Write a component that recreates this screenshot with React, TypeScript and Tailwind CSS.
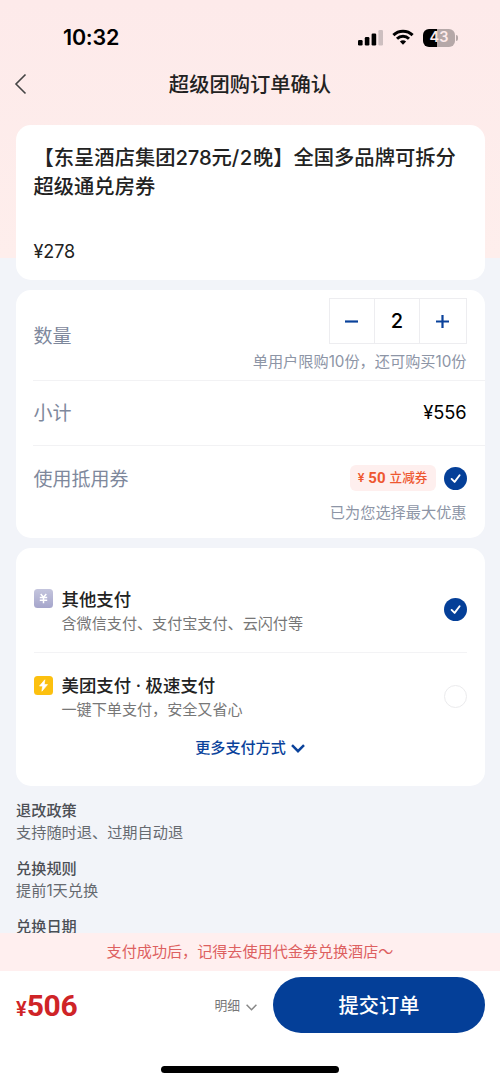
import type { ReactNode } from "react";

const policies = [
  { title: "退改政策", text: "支持随时退、过期自动退" },
  { title: "兑换规则", text: "提前1天兑换" },
  { title: "兑换日期", text: "" },
];

const StatusBar = () => (
  <div className="flex h-[60px] shrink-0 items-start justify-between pt-[26px] pr-[42px] pl-[63px]">
    <span className="text-[21.5px] leading-[23px] font-semibold tracking-[-0.2px] text-black">10:32</span>
    <div className="flex h-6 items-center">
      <svg width="26" height="18" viewBox="0 0 26 18" className="mr-[8px]">
        <rect x="0" y="11" width="4.6" height="5.5" rx="1.2" />
        <rect x="6.8" y="8" width="4.6" height="8.5" rx="1.2" />
        <rect x="13.6" y="4.5" width="4.6" height="12" rx="1.2" />
        <rect x="20.4" y="1" width="4.6" height="15.5" rx="1.2" fill="#cdbfc0" />
      </svg>
      {/* Wifi */}
      <svg width="22" height="17" viewBox="0 0 22 17" className="mr-[9px] -mt-px" fill="none" stroke="#000" strokeWidth="3">
        <path d="M1.4 6.1a13.7 13.7 0 0 1 19.2 0" />
        <path d="M5 9.8a8.6 8.6 0 0 1 12 0" />
        <path d="M7.9 12.6a4.5 4.5 0 0 1 6.2 0L11 15.8z" fill="#000" stroke="none" />
      </svg>
      {/* Battery, filled to 43% */}
      <div className="-mt-px flex h-[18px] w-[32px] items-center justify-center rounded-[6px] bg-[linear-gradient(90deg,#000_43%,#b5a8a8_43%)] text-[14.5px] leading-none font-semibold text-[#fdebeb]">
        43
      </div>
      <div className="-mt-px ml-px h-[6px] w-[2px] rounded-r-full bg-[#b5a8a8]" />
    </div>
  </div>
);

const Card = ({ className, children }: { className: string; children: ReactNode }) => (
  <section className={`mx-auto w-[469px] shrink-0 rounded-[15px] bg-white ${className}`}>{children}</section>
);

const CheckedCircle = () => (
  <svg width="23" height="23" viewBox="0 0 23 23" className="shrink-0">
    <circle cx="11.5" cy="11.5" r="11.5" fill="#043f98" />
    <path d="M7.6 11.9l3 3 5-6.6" fill="none" stroke="#fff" strokeWidth="1.9" strokeLinecap="round" strokeLinejoin="round" />
  </svg>
);

const Stepper = () => (
  <div className="grid h-[46px] w-[138px] grid-cols-3 divide-x divide-[#ededf0] border border-[#ededf0]">
    <button className="flex items-center justify-center">
      <svg width="13" height="13" stroke="#0a429b" strokeWidth="2.2"><path d="M0 6.5h13" /></svg>
    </button>
    <span className="flex items-center justify-center text-[20px] font-medium text-black">2</span>
    <button className="flex items-center justify-center">
      <svg width="13" height="13" stroke="#0a429b" strokeWidth="2.2"><path d="M0 6.5h13M6.5 0v13" /></svg>
    </button>
  </div>
);

const App = () => {
  return (
    <main className="flex h-[1083px] w-[500px] flex-col overflow-hidden bg-[#f2f4f9] bg-[linear-gradient(180deg,#fdeaea_0px,#feeeec_258px,#f2f4f9_258px)] font-['Inter','Noto_Sans_CJK_SC',sans-serif] text-[#222]">
      <StatusBar />

      <header className="grid h-[65px] shrink-0 grid-cols-[60px_1fr_60px] pt-[9px]">
        <svg width="14" height="22" viewBox="0 0 14 22" className="mt-[4px] ml-[14px]" fill="none" stroke="#444" strokeWidth="1.6">
          <path d="M11.5 1.5L2 11l9.5 9.5" />
        </svg>
        <h1 className="text-center text-[20.3px] leading-[32px] font-medium">超级团购订单确认</h1>
      </header>

      <div className="flex min-h-0 flex-1 flex-col overflow-hidden">
        <Card className="h-[155px] px-[18px] pt-[18px]">
          <h2 className="text-[20.3px] leading-[29px] font-medium whitespace-nowrap">
            【东呈酒店集团<span className="tracking-[-0.2px]">278</span>元<span className="tracking-[0.6px]">/2</span>晚】全国多品牌可拆分
            <br />
            超级通兑房券
          </h2>
          <p className="mt-[39px] text-[18px] leading-6 tracking-[-0.1px]">¥278</p>
        </Card>

        <Card className="mt-[10px] h-[248px] pl-[17px]">
          <div className="flex h-[91px] justify-between border-b border-[#f2f2f4] pt-[8px] pr-[18px]">
            <span className="mt-[25px] ml-px text-[19px] leading-7 text-[#7e889c]">数量</span>
            <div className="flex flex-col items-end">
              <Stepper />
              <span className="mt-[7px] text-[15.2px] leading-[22px] text-[#8d95a6]">单用户限购10份，还可购买10份</span>
            </div>
          </div>
          <div className="flex h-[65px] items-center justify-between border-b border-[#f2f2f4] pr-[18px]">
            <span className="mt-[3px] ml-px text-[19px] text-[#7e889c]">小计</span>
            <span className="text-[18.3px] tracking-[-0.1px] text-black">¥556</span>
          </div>
          <div className="flex justify-between pt-[20px] pr-[18px]">
            <span className="ml-px text-[19px] leading-7 text-[#7e889c]">使用抵用券</span>
            <div className="flex flex-col items-end">
              <div className="-mt-px flex items-center gap-[8px]">
                <span className="flex h-[26px] w-[86px] items-center justify-center gap-[4px] rounded-[6px] bg-[#feefee] font-['Roboto','Noto_Sans_CJK_SC',sans-serif] text-[12.6px] font-medium text-[#ee5730]">
                  <span>¥</span>
                  <b className="text-[15px] leading-none">50</b>
                  <span>立减券</span>
                </span>
                <CheckedCircle />
              </div>
              <span className="mt-[11px] text-[15.2px] leading-[22px] text-[#8d95a6]">已为您选择最大优惠</span>
            </div>
          </div>
        </Card>

        <Card className="mt-[10px] h-[238px] px-[18px] pt-[17px]">
          <div className="flex h-[88px] items-center justify-between border-b border-[#f3f3f5]">
            <div className="mt-[3px] flex">
              <svg width="19" height="19" viewBox="0 0 19 19" className="mt-[2px] mr-[9px]">
                <defs>
                  <linearGradient id="lilac" x1="0" y1="0" x2="0" y2="1">
                    <stop stopColor="#c4c5dd" />
                    <stop offset="1" stopColor="#a5a5cb" />
                  </linearGradient>
                </defs>
                <rect width="19" height="19" rx="3.5" fill="url(#lilac)" />
                <path d="M6.7 5l2.8 3.3L12.3 5M5.8 8.6h7.4M5.8 11.2h7.4M9.5 8.3v6" fill="none" stroke="#fff" strokeWidth="1.5" />
              </svg>
              <div>
                <p className="text-[17.4px] leading-[26px] font-medium">其他支付</p>
                <p className="text-[15.1px] leading-[21px] text-[#777]">含微信支付、支付宝支付、云闪付等</p>
              </div>
            </div>
            <div className="mt-[2px]">
              <CheckedCircle />
            </div>
          </div>
          <div className="flex h-[87px] items-center justify-between">
            <div className="flex">
              <svg width="19" height="19" viewBox="0 0 19 19" className="mt-[3px] mr-[9px]">
                <rect width="19" height="19" rx="3.5" fill="#fcc00f" />
                <path d="M10.8 3.8L5.5 10h3.2l-.8 5.2 5.6-6.6h-3.3z" fill="#fff" stroke="#fff" strokeWidth=".7" strokeLinejoin="round" />
              </svg>
              <div>
                <p className="text-[17.4px] leading-[26px] font-medium">美团支付 · 极速支付</p>
                <p className="text-[15.1px] leading-[21px] text-[#777]">一键下单支付，安全又省心</p>
              </div>
            </div>
            <span className="size-[23px] rounded-full border-[1.5px] border-[#ebebed]" />
          </div>
          <div className="-mt-[3px] flex items-center justify-center gap-[5px] text-[15.1px] leading-[22px] font-medium text-[#0a429b]">
            更多支付方式
            <svg width="14" height="9" viewBox="0 0 14 9" fill="none" stroke="currentColor" strokeWidth="2.5">
              <path d="M1 1.2l6 6 6-6" />
            </svg>
          </div>
        </Card>

        <div className="mt-[14px] shrink-0 pl-[16px] text-[15.2px] leading-[21.5px] text-[#666a70]">
          {policies.map((item) => (
            <div key={item.title} className="mb-[15px]">
              <p className="font-medium text-[#4c4f55]">{item.title}</p>
              <p>{item.text}</p>
            </div>
          ))}
        </div>
      </div>

      <p className="h-[38px] shrink-0 bg-[#ffefef] text-center text-[15.1px] leading-[38px] text-[#dd6060]">
        支付成功后，记得去使用代金券兑换酒店～
      </p>

      <footer className="flex h-[112px] shrink-0 flex-col items-center bg-white">
        <div className="flex h-[62px] w-full items-end pr-[15px] pl-[16px]">
          <div className="mb-[7px] flex items-baseline font-['Roboto','Noto_Sans_CJK_SC',sans-serif] leading-[34px] text-[#cf2427]">
            <span className="text-[20px] font-semibold">¥</span>
            <span className="text-[30px] font-bold tracking-[-0.3px]">506</span>
          </div>
          <span className="mb-[17px] ml-auto flex items-center gap-[6px] text-[12.8px] leading-5 text-[#777]">
            明细
            <svg width="11" height="7" viewBox="0 0 11 7" className="mt-[2px]" fill="none" stroke="#888" strokeWidth="1.5">
              <path d="M.6.8l4.9 4.9L10.4.8" />
            </svg>
          </span>
          <button className="ml-[16px] h-[56px] w-[212px] rounded-full bg-[#043f98] pt-[2px] text-[20.2px] font-medium text-white">
            提交订单
          </button>
        </div>
        <div className="mt-[33px] h-[7px] w-[178px] rounded-full bg-black" />
      </footer>
    </main>
  );
};

export default App;
